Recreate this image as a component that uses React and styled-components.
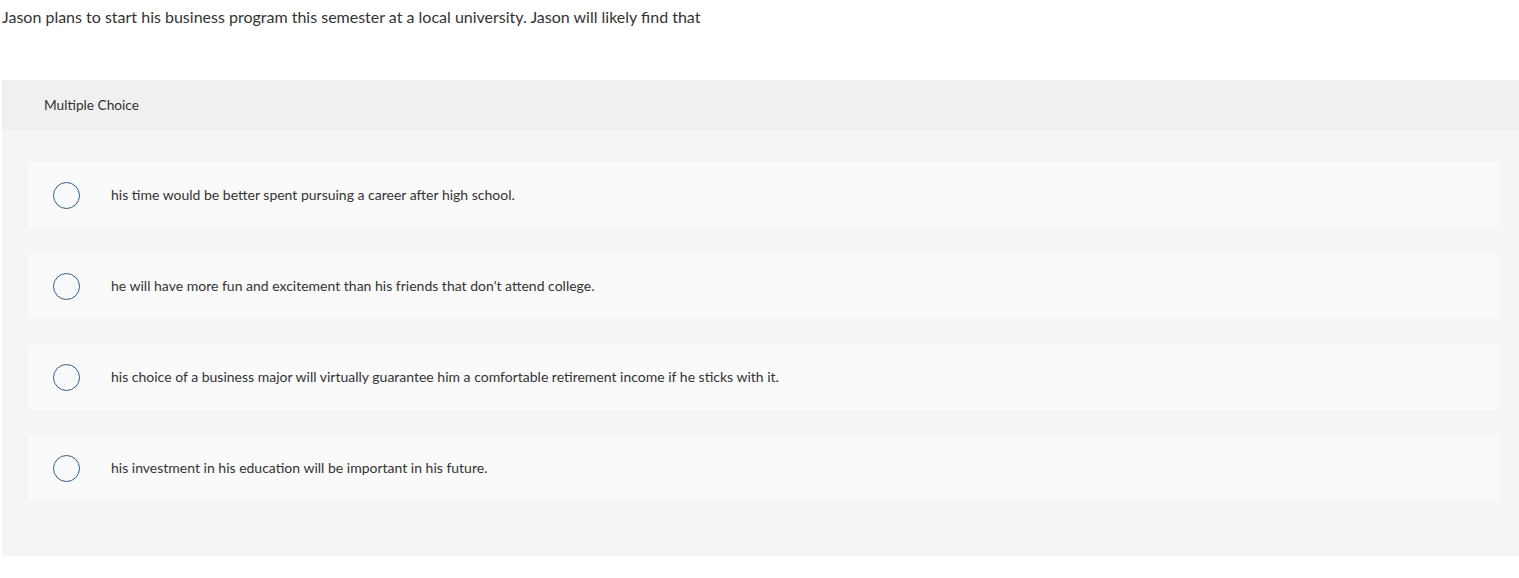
import React from "react";
import styled, { createGlobalStyle } from "styled-components";

const Global = createGlobalStyle`
  html, body { margin: 0; padding: 0; background: #fff; }
  body { font-family: Lato, "Open Sans", sans-serif; color: #333; }
`;

const Page = styled.div`
  padding: 8px 0 0 2px;
`;

const Question = styled.p`
  margin: 0 0 54px 0;
  font-size: 16px;
  line-height: 18px;
  color: #333;
`;

const Panel = styled.section`
  background: #f5f5f5;
  border-radius: 0 0 3px 3px;
  padding-bottom: 55px;
`;

const Header = styled.div`
  background: #f0f0f0;
  height: 50px;
  box-sizing: border-box;
  padding: 0 0 2px 42px;
  display: flex;
  align-items: center;
  font-size: 13.7px;
  color: #333;
`;

const List = styled.div`
  display: flex;
  flex-direction: column;
  gap: 25px;
  padding: 32px 20px 0 26px;
`;

const Option = styled.label`
  display: flex;
  align-items: center;
  height: 66px;
  box-sizing: border-box;
  padding: 0 0 0 25px;
  background: #fafafa;
  border-radius: 3px;
  font-size: 14px;
  color: #333;
  cursor: pointer;
`;

const Radio = styled.span`
  width: 25px;
  height: 25px;
  border: 1.5px solid #2c5d88;
  border-radius: 50%;
  flex: none;
  margin-right: 31px;
`;

const Label = styled.span`
  margin-bottom: 2px;
`;

const options = [
  "his time would be better spent pursuing a career after high school.",
  "he will have more fun and excitement than his friends that don't attend college.",
  "his choice of a business major will virtually guarantee him a comfortable retirement income if he sticks with it.",
  "his investment in his education will be important in his future.",
];

export default function App() {
  return (
    <Page>
      <Global />
      <Question>
        Jason plans to start his business program this semester at a local university. Jason will likely find that
      </Question>
      <Panel>
        <Header>Multiple Choice</Header>
        <List>
          {options.map((o) => (
            <Option key={o}>
              <Radio />
              <Label>{o}</Label>
            </Option>
          ))}
        </List>
      </Panel>
    </Page>
  );
}
